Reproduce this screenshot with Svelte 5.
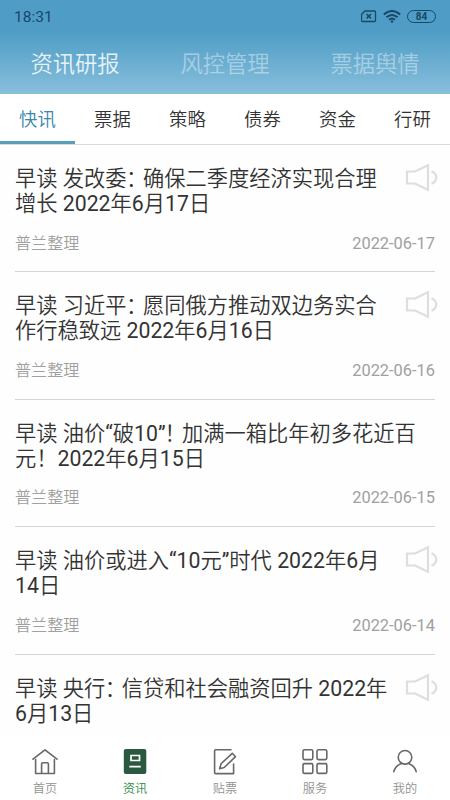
<script>
  const sections = ['资讯研报', '风控管理', '票据舆情'];
  const tabs = ['快讯', '票据', '策略', '债券', '资金', '行研'];
  const news = [
    { lines: ['早读 发改委：确保二季度经济实现合理', '增长 2022年6月17日'], date: '2022-06-17', audio: true },
    { lines: ['早读 习近平：愿同俄方推动双边务实合', '作行稳致远 2022年6月16日'], date: '2022-06-16', audio: true },
    { lines: ['早读 油价“破10”！加满一箱比年初多花近百', '元！2022年6月15日'], date: '2022-06-15', audio: false },
    { lines: ['早读 油价或进入“10元”时代 2022年6月', '14日'], date: '2022-06-14', audio: true },
    { lines: ['早读 央行：信贷和社会融资回升 2022年', '6月13日'], audio: true }
  ];
  const nav = ['首页', '资讯', '贴票', '服务', '我的'];

  // Splits a title into digits, tightened punctuation and plain runs.
  const runs = (line) => line.split(/([\d“” ]+|：|！(?=加))/).filter(Boolean);
  const kind = (run) => (run === '：' ? 'colon' : run === '！' ? 'bang' : /^[\d“” ]+$/.test(run) ? 'latin' : 'han');
</script>

<div class="app">
  <header>
    <div class="status">
      <span>18:31</span>
      <div class="signals">
        <svg width="16" height="13" viewBox="0 0 16 13" fill="none" stroke="currentColor" stroke-width="1.3"><path d="M4 1h9.5q1 0 1 1v8.5q0 1-1 1h-12q-1 0-1-1V4.5z"/><path d="M5.6 4l4.4 4.4M10 4L5.6 8.4" stroke-width="1.5"/></svg>
        <svg class="wifi" width="18" height="13" viewBox="0 0 18 13" fill="none" stroke="currentColor" stroke-width="1.9"><path d="M.8 4.6Q9-2.4 17.2 4.6M3.4 7.3Q9 2.5 14.6 7.3M6 9.8Q9 7.3 12 9.8"/><circle cx="9" cy="11.5" r="1.2" fill="currentColor" stroke="none"/></svg>
        <span class="battery">84</span>
      </div>
    </div>
    <div class="sections">
      {#each sections as s, i}<span class:active={i === 0}>{s}</span>{/each}
    </div>
  </header>
  <div class="tabs">
    {#each tabs as t, i}<span class:active={i === 0}>{t}</span>{/each}
  </div>
  <main>
    {#each news as item}
      <article>
        <h2>
          {#each item.lines as line}
            <div>{#each runs(line) as run}<span class={kind(run)}>{run}</span>{/each}</div>
          {/each}
        </h2>
        {#if item.audio}
          <svg class="speaker" width="34" height="30" viewBox="0 0 34 30" fill="none" stroke="#dedede" stroke-width="2.2"><path d="M2 8.5h8L23 2.3v24.4l-13-6.2H2z"/><path d="M26.5 8.2q4.8 2.2 4.8 6.3t-4.8 6.3"/></svg>
        {/if}
        {#if item.date}
          <div class="meta"><span>普兰整理</span><time>{item.date}</time></div>
        {/if}
      </article>
    {/each}
  </main>
  <nav>
    {#each nav as label, i}
      <div class="item" class:active={i === 1}>
        <svg width="28" height="28" viewBox="0 0 28 28" fill="none" stroke="#686868" stroke-width="1.6" stroke-linecap="round" stroke-linejoin="round">
          {#if i === 0}
            <path d="M2 11.2L14 1.8l12 9.4M4.6 11.5v14h18.8v-14M10.6 25.2V16q0-1.3 1.3-1.3h4.2q1.3 0 1.3 1.3v9.2"/>
          {:else if i === 1}
            <rect x="2.8" y="1" width="22.5" height="25" rx="2" fill="#2b5940" stroke="none"/><path d="M10 7.5h8.5v5H10zM8.3 18.7h11.5" stroke="#fff" stroke-width="1.7" stroke-linecap="butt" stroke-linejoin="miter"/>
          {:else if i === 2}
            <path d="M20 1.8H4.5q-.9 0-.9.9v22q0 .9.9.9h18.1V16M8.6 20.8l1.6-5.3L21.3 5.3l3.2 3.4L13.2 19.5z"/>
          {:else if i === 3}
            <rect x="2" y="1.8" width="9.8" height="9.8" rx="1.5"/><rect x="16" y="1.8" width="9.8" height="9.8" rx="1.5"/><rect x="2" y="15.6" width="9.8" height="9.8" rx="1.5"/><rect x="16" y="15.6" width="9.8" height="9.8" rx="1.5"/>
          {:else}
            <circle cx="14" cy="9.3" r="6.8"/><path d="M2.8 23.6q1.5-6 7.6-8.2M17.6 15.4q6.1 2.2 7.6 8.2"/>
          {/if}
        </svg>
        <span>{label}</span>
      </div>
    {/each}
  </nav>
</div>

<style>
  :global(body) { margin: 0; }
  .app { width: 450px; height: 800px; display: flex; flex-direction: column; overflow: hidden; background: #fefefe; font-family: Roboto, "Noto Sans CJK SC", sans-serif; font-weight: 350; color: #333; }
  header { height: 94px; flex: none; background: linear-gradient(#4f9dc6 0, #4f9dc6 32px, #88bfdc 94px); }
  .status { height: 33px; padding: 0 14px; display: flex; align-items: center; justify-content: space-between; font-size: 15.5px; font-weight: 400; color: #174866; }
  .signals { display: flex; align-items: center; }
  .wifi { margin: 0 6px 0 6px; }
  .battery { box-sizing: border-box; width: 29px; height: 13px; border: 1px solid; border-radius: 7px; font-size: 10px; font-weight: 700; line-height: 11.5px; text-align: center; }
  .sections { height: 61px; display: flex; font-size: 22.3px; color: rgba(255,255,255,.42); }
  .sections span { flex: 1; text-align: center; line-height: 62px; }
  .sections .active { color: rgba(255,255,255,.85); }
  .tabs { box-sizing: border-box; height: 51px; flex: none; display: flex; border-bottom: 1px solid #dadada; background: #fff; font-size: 18.4px; }
  .tabs span { flex: 1; text-align: center; line-height: 52px; height: 47px; }
  .tabs .active { color: #3988aa; border-bottom: 3px solid #5a9dbb; }
  main { flex: 1; min-height: 0; overflow: hidden; padding: 0 15px; }
  article { box-sizing: border-box; height: 127.5px; padding-top: 21.3px; border-bottom: 1px solid #d4d4d4; position: relative; }
  article:first-child { height: 127px; }
  h2 { margin: 0; font-size: 21.25px; font-weight: 350; line-height: 25px; white-space: nowrap; }
  h2 div { height: 25px; }
  .latin { font-weight: 400; }
  .colon { margin-left: -0.5px; letter-spacing: -4.3px; }
  .bang { margin-left: -1px; letter-spacing: -3.9px; }
  .speaker { position: absolute; right: -4px; top: 18px; }
  .meta { margin-top: 17.7px; line-height: 20px; display: flex; justify-content: space-between; font-size: 16.1px; color: #a0a0a0; }
  .meta time { font-size: 16.4px; font-weight: 400; }
  nav { height: 65px; flex: none; display: flex; background: #fff; }
  .item { flex: 1; padding-top: 13px; display: flex; flex-direction: column; align-items: center; font-size: 12.2px; line-height: 18px; color: #929292; }
  .item span { margin-top: 4px; }
  .item.active { color: #2e8b45; }
</style>
